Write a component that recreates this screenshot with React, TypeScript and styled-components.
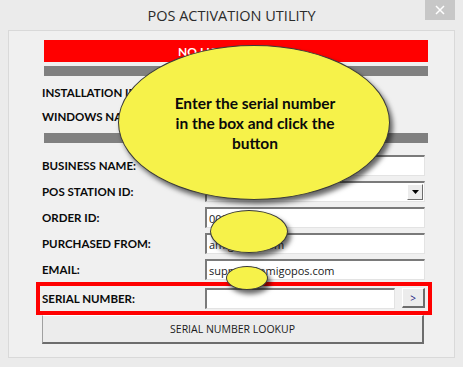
import styled, { createGlobalStyle } from "styled-components";

const GlobalStyle = createGlobalStyle`
  html, body {
    margin: 0;
    padding: 0;
    background: #ebebeb;
  }
`;

const Window = styled.div`
  position: relative;
  width: 463px;
  height: 367px;
  background: #ebebeb;
  box-sizing: border-box;
  font-family: "Open Sans", "Noto Sans", sans-serif;
  overflow: hidden;
`;

const TitleBar = styled.div`
  position: relative;
  height: 30px;
  display: flex;
  align-items: center;
  justify-content: center;
  font-size: 14.5px;
  color: #2b2b2b;
`;

const CloseButton = styled.div`
  position: absolute;
  top: 0;
  right: 8px;
  width: 30px;
  height: 20px;
  background: #c7c7c7;
  display: flex;
  align-items: center;
  justify-content: center;
`;

const Panel = styled.div`
  margin: 0 8px;
  height: 328px;
  box-sizing: border-box;
  border: 1px solid #d9d9d9;
  background: #f0f0f0;
  padding: 9px 0 0 27px;
`;

const Content = styled.div`
  width: 396px;
  display: flex;
  flex-direction: column;
`;

const StatusBar = styled.div`
  margin-left: 8px;
  width: 384px;
  height: 22px;
  background: #ff0000;
  color: #ffffff;
  font-family: Lato, "Open Sans", sans-serif;
  font-weight: 700;
  font-size: 12px;
  display: flex;
  align-items: center;
  justify-content: center;
`;

const Divider = styled.div<{ $top: number }>`
  margin-left: 8px;
  margin-top: ${(p) => p.$top}px;
  width: 384px;
  height: 10px;
  background: #808080;
`;

const InfoRow = styled.div<{ $first?: boolean }>`
  height: 24px;
  margin-top: ${(p) => (p.$first ? 4 : 0)}px;
  display: flex;
  align-items: center;
  padding-left: 6px;
`;

const Label = styled.div`
  font-family: Lato, "Open Sans", sans-serif;
  font-weight: 700;
  font-size: 11.5px;
  color: #0a0a0a;
  width: 163px;
  flex-shrink: 0;
`;

const Fields = styled.div`
  margin-top: 12px;
  display: flex;
  flex-direction: column;
  gap: 5px;
`;

const FieldRow = styled.div`
  height: 21px;
  display: flex;
  align-items: center;
  padding-left: 6px;
`;

const Input = styled.div<{ $width?: number }>`
  width: ${(p) => p.$width ?? 220}px;
  height: 21px;
  box-sizing: border-box;
  background: #ffffff;
  border-top: 2px solid #7a7a7a;
  border-left: 2px solid #7a7a7a;
  border-right: 1px solid #e3e3e3;
  border-bottom: 1px solid #e3e3e3;
  font-size: 11px;
  color: #1a1a1a;
  padding-left: 2px;
  display: flex;
  align-items: center;
  justify-content: space-between;
  white-space: nowrap;
  overflow: hidden;
`;

const DropButton = styled.div`
  width: 16px;
  height: 16px;
  margin-right: 1px;
  box-sizing: border-box;
  background: #ececec;
  border-top: 1px solid #ffffff;
  border-left: 1px solid #ffffff;
  border-right: 1px solid #6d6d6d;
  border-bottom: 1px solid #6d6d6d;
  display: flex;
  align-items: center;
  justify-content: center;
`;

const SerialBox = styled.div`
  margin-top: 2px;
  height: 33px;
  box-sizing: border-box;
  border: 4px solid #ff0000;
  display: flex;
  align-items: center;
  padding: 0 3px 1px 2px;
`;

const SmallButton = styled.div`
  margin-left: 7px;
  width: 23px;
  height: 20px;
  box-sizing: border-box;
  background: #ececec;
  border-top: 1px solid #ffffff;
  border-left: 1px solid #ffffff;
  border-right: 2px solid #6d6d6d;
  border-bottom: 2px solid #6d6d6d;
  display: flex;
  align-items: center;
  justify-content: center;
  font-size: 10px;
  color: #1a1a80;
`;

const LookupButton = styled.div`
  margin-left: 6px;
  width: 382px;
  height: 29px;
  box-sizing: border-box;
  background: #ececec;
  border-top: 1px solid #ffffff;
  border-left: 1px solid #a0a0a0;
  border-right: 2px solid #6d6d6d;
  border-bottom: 2px solid #6d6d6d;
  display: flex;
  align-items: center;
  justify-content: center;
  font-size: 10.5px;
  color: #1a1a1a;
`;

const Bubble = styled.div<{ $x: number; $y: number; $w: number; $h: number }>`
  position: absolute;
  left: ${(p) => p.$x}px;
  top: ${(p) => p.$y}px;
  width: ${(p) => p.$w}px;
  height: ${(p) => p.$h}px;
  box-sizing: border-box;
  border-radius: 50%;
  background: #f6f24a;
  border: 1px solid #3a3a3a;
  box-shadow: 3px 4px 5px rgba(0, 0, 0, 0.6);
  display: flex;
  align-items: center;
  justify-content: center;
  text-align: center;
  font-family: Lato, "Open Sans", sans-serif;
  font-weight: 700;
  font-size: 15.5px;
  line-height: 20px;
  color: #0a0a0a;
  padding-left: 2px;
`;

export default function App() {
  return (
    <Window>
      <GlobalStyle />
      <TitleBar>
        POS ACTIVATION UTILITY
        <CloseButton>
          <svg width="10" height="10" viewBox="0 0 10 10">
            <path d="M1 1 L9 9 M9 1 L1 9" stroke="#ffffff" strokeWidth="1.5" />
          </svg>
        </CloseButton>
      </TitleBar>
      <Panel>
        <Content>
          <StatusBar>NO LICENSE FOUND</StatusBar>
          <Divider $top={4} />
          <InfoRow $first>
            <Label>INSTALLATION ID:</Label>
          </InfoRow>
          <InfoRow>
            <Label>WINDOWS NAME:</Label>
          </InfoRow>
          <Divider $top={5} />
          <Fields>
            <FieldRow>
              <Label>BUSINESS NAME:</Label>
              <Input />
            </FieldRow>
            <FieldRow>
              <Label>POS STATION ID:</Label>
              <Input>
                <span />
                <DropButton>
                  <svg width="7" height="4" viewBox="0 0 7 4">
                    <path d="M0 0 H7 L3.5 4 Z" fill="#000000" />
                  </svg>
                </DropButton>
              </Input>
            </FieldRow>
            <FieldRow>
              <Label>ORDER ID:</Label>
              <Input>0001234</Input>
            </FieldRow>
            <FieldRow>
              <Label>PURCHASED FROM:</Label>
              <Input>amigopos.com</Input>
            </FieldRow>
            <FieldRow>
              <Label>EMAIL:</Label>
              <Input>support@amigopos.com</Input>
            </FieldRow>
          </Fields>
          <SerialBox>
            <Label>SERIAL NUMBER:</Label>
            <Input $width={190} />
            <SmallButton>&gt;</SmallButton>
          </SerialBox>
          <LookupButton>SERIAL NUMBER LOOKUP</LookupButton>
        </Content>
      </Panel>
      <Bubble $x={118} $y={45} $w={272} $h={155}>
        Enter the serial number
        <br />
        in the box and click the
        <br />
        button
      </Bubble>
      <Bubble $x={210} $y={210} $w={78} $h={43} />
      <Bubble $x={226} $y={266} $w={42} $h={24} />
    </Window>
  );
}
